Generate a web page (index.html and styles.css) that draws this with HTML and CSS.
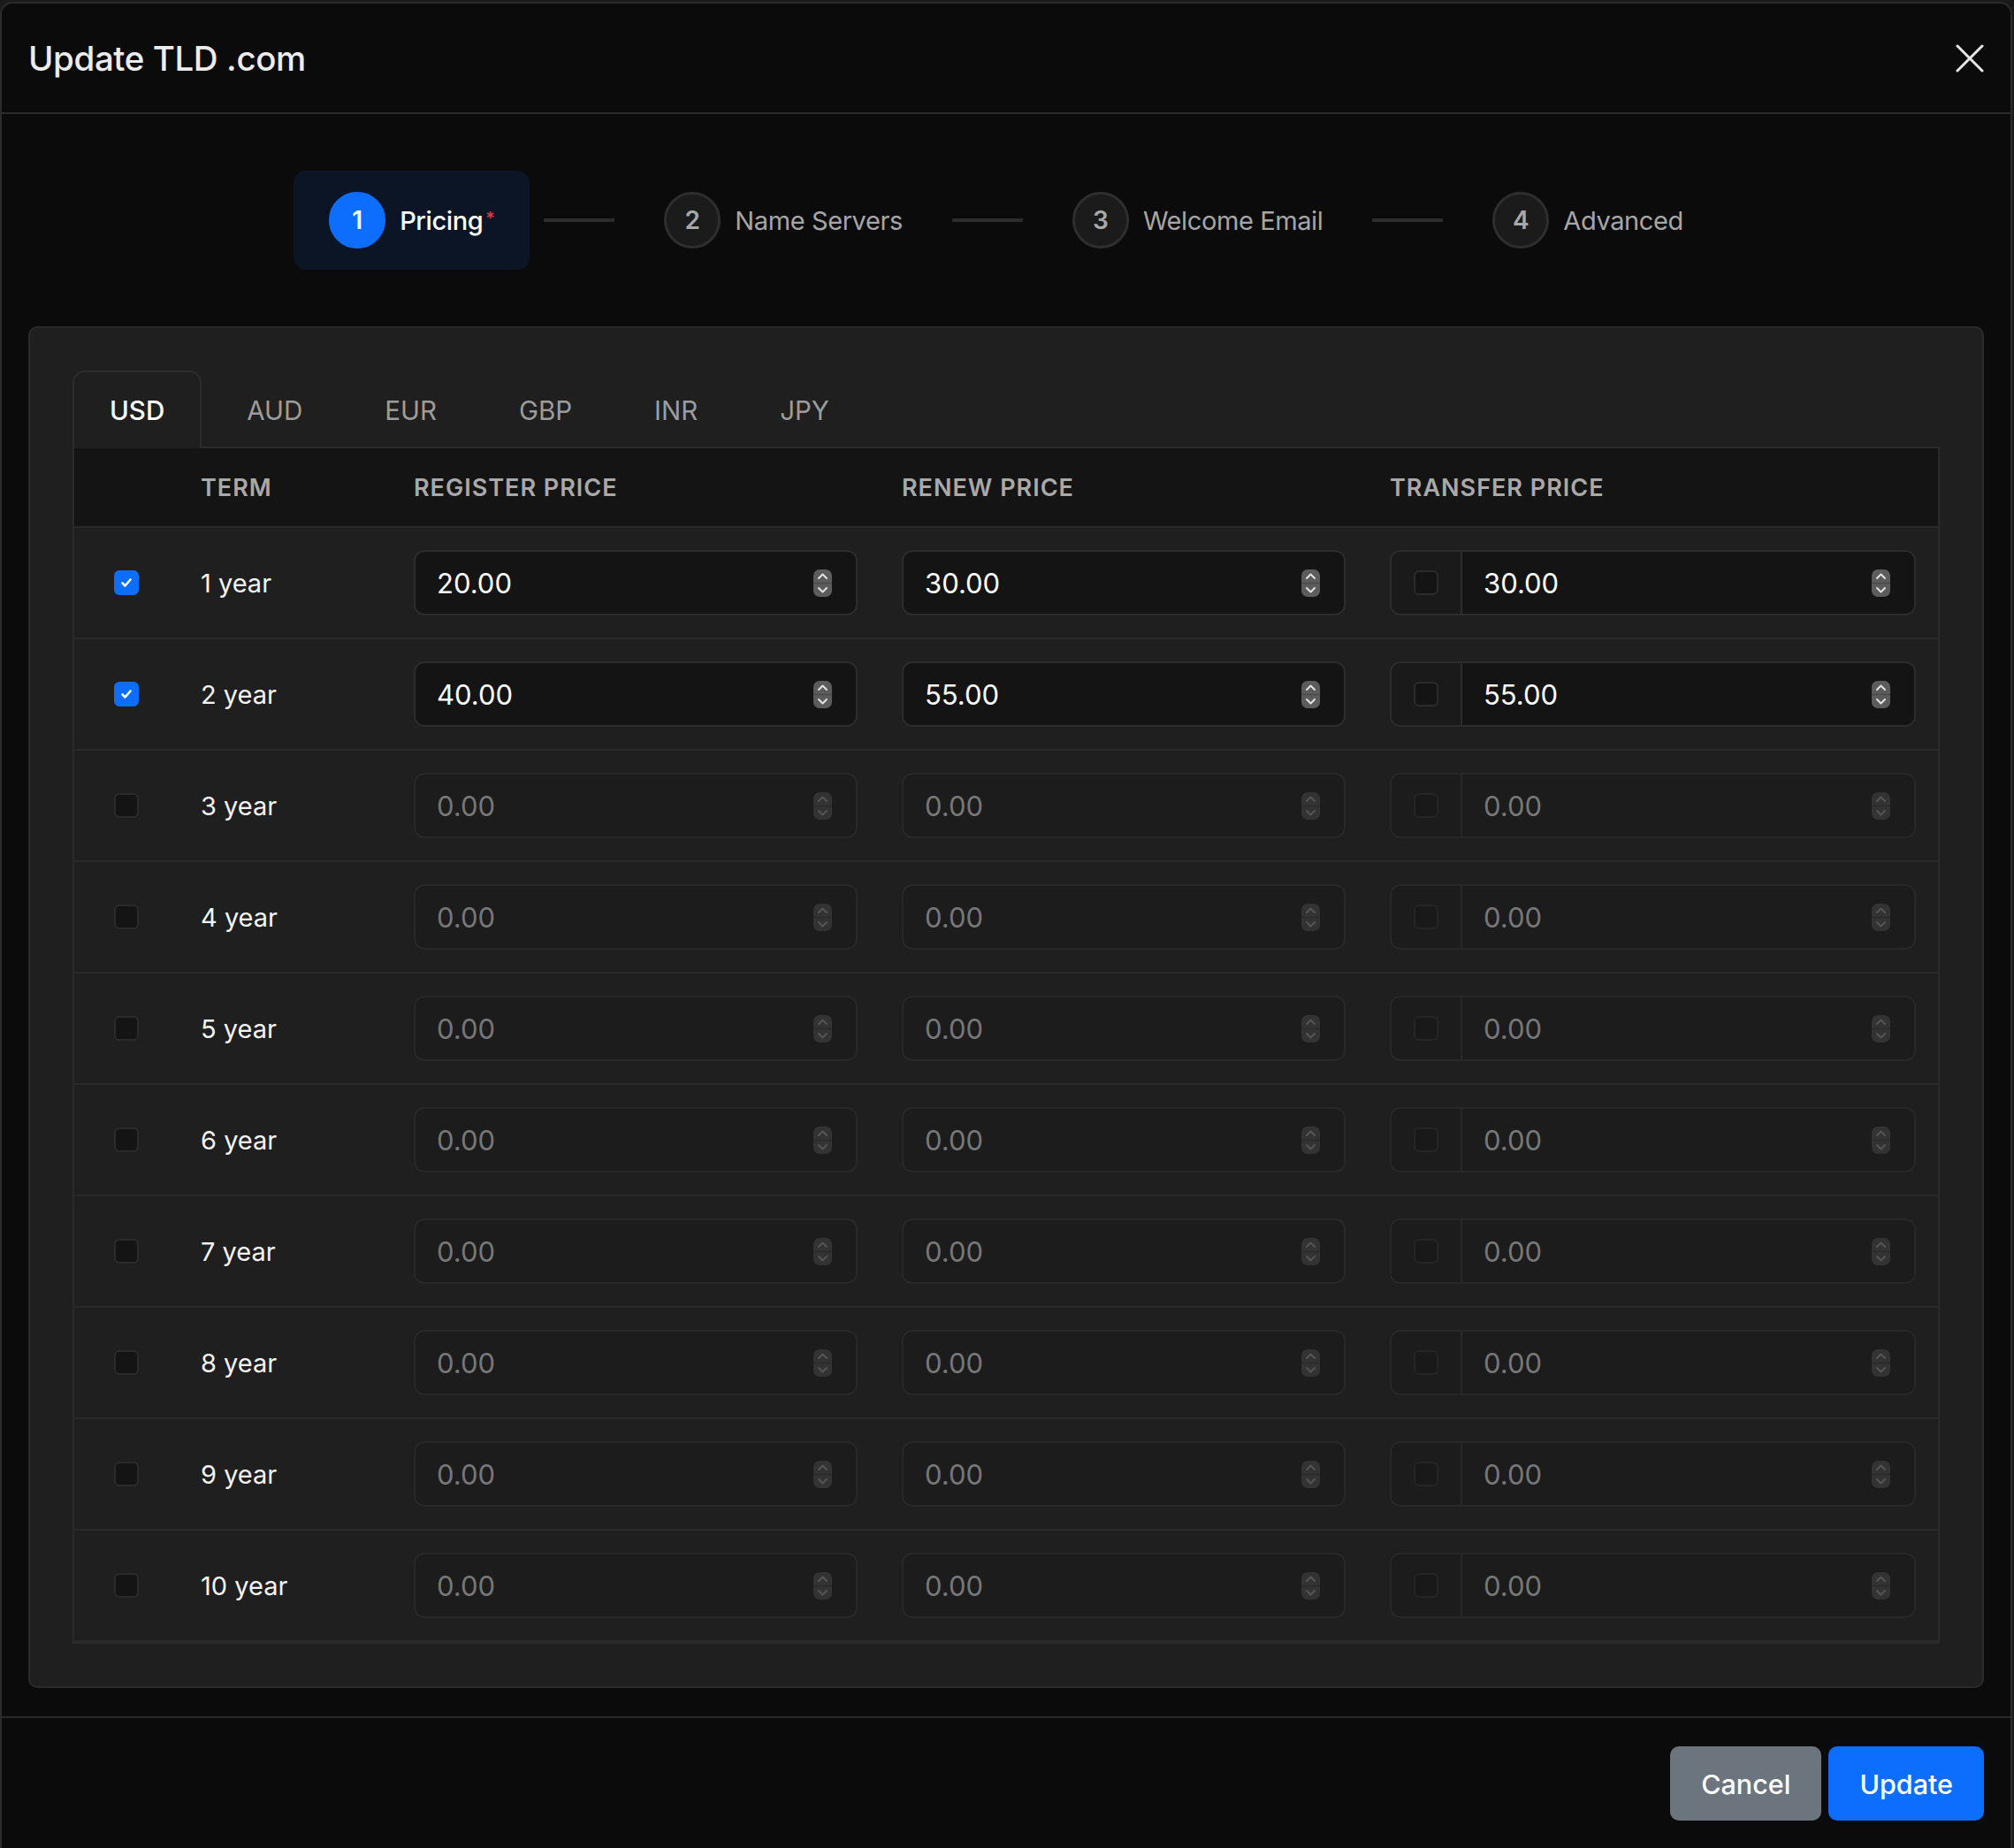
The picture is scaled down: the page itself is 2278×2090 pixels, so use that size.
FILE: index.html
```html
<!DOCTYPE html>
<html>
<head>
  <meta charset="UTF-8">
  <title>Update TLD .com</title>
  <link rel="stylesheet" href="styles.css">
</head>
<body>
  <div class="modal">
    <div class="modal-header">
      <h1 class="modal-title">Update TLD .com</h1>
      <button class="close-btn" aria-label="Close">
        <svg width="32" height="32" viewBox="0 0 32 32"><path d="M2 2 L30 30 M30 2 L2 30" stroke="#e6e6e6" stroke-width="3" stroke-linecap="round"/></svg>
      </button>
    </div>

    <div class="modal-body">
      <div class="stepper">
        <div class="step active"><span class="step-num">1</span><span class="step-label">Pricing<sup class="req">*</sup></span></div>
        <div class="step-line"></div>
        <div class="step"><span class="step-num">2</span><span class="step-label">Name Servers</span></div>
        <div class="step-line"></div>
        <div class="step"><span class="step-num">3</span><span class="step-label">Welcome Email</span></div>
        <div class="step-line"></div>
        <div class="step"><span class="step-num">4</span><span class="step-label">Advanced</span></div>
      </div>

      <div class="card">
        <div class="tabs">
          <div class="tab active">USD</div>
          <div class="tab">AUD</div>
          <div class="tab">EUR</div>
          <div class="tab">GBP</div>
          <div class="tab">INR</div>
          <div class="tab">JPY</div>
        </div>

        <div class="price-table" id="priceTable">
          <div class="row head">
            <div></div>
            <div>Term</div>
            <div>Register Price</div>
            <div>Renew Price</div>
            <div>Transfer Price</div>
          </div>
        </div>
      </div>
    </div>

    <div class="modal-footer">
      <button class="btn btn-cancel">Cancel</button>
      <button class="btn btn-update">Update</button>
    </div>
  </div>

  <script>
    const prices = {
      1: ['20.00', '30.00', '30.00'],
      2: ['40.00', '55.00', '55.00']
    };
    const table = document.getElementById('priceTable');

    const spin = `<span class="spin"><svg width="21" height="31" viewBox="0 0 21 31">
      <rect x="0" y="0" width="21" height="31" rx="7" class="spin-bg"/>
      <line x1="0" y1="15.5" x2="21" y2="15.5" class="spin-mid"/>
      <path d="M6 10 L10.5 5.5 L15 10 M6 21 L10.5 25.5 L15 21" class="spin-arrow"/>
    </svg></span>`;

    const tick = `<svg width="16" height="16" viewBox="0 0 16 16"><path d="M3.5 8.5 L6.5 11.5 L12.5 4.5" fill="none" stroke="#fff" stroke-width="2.6" stroke-linecap="round" stroke-linejoin="round"/></svg>`;

    function field(val) {
      return `<div class="field"><input type="text" value="${val}" readonly>${spin}</div>`;
    }

    for (let y = 1; y <= 10; y++) {
      const p = prices[y];
      const on = !!p;
      const row = document.createElement('div');
      row.className = 'row' + (on ? '' : ' off');
      row.innerHTML = `
        <div class="cell-check"><span class="check${on ? ' checked' : ''}">${on ? tick : ''}</span></div>
        <div class="term">${y} year</div>
        <div>${field(on ? p[0] : '0.00')}</div>
        <div>${field(on ? p[1] : '0.00')}</div>
        <div><div class="group"><span class="addon"><span class="check small"></span></span>${field(on ? p[2] : '0.00')}</div></div>`;
      table.appendChild(row);
    }
  </script>
</body>
</html>
```

FILE: styles.css
```css
* {
  margin: 0;
  padding: 0;
  box-sizing: border-box;
}

body {
  background: #1a1a1a;
  font-family: Inter, 'Noto Sans', sans-serif;
  color: #f2f2f2;
  padding-top: 2px;
}

.modal {
  background: #0b0b0b;
  border: 2px solid #2b2b2b;
  border-bottom: none;
  border-radius: 14px 14px 0 0;
  min-height: 2088px;
  margin-right: 2px;
}

.modal-header {
  height: 125px;
  padding: 0 30px;
  display: flex;
  align-items: center;
  justify-content: space-between;
  border-bottom: 2px solid #2a2a2a;
}

.modal-title {
  font-size: 38.5px;
  font-weight: 500;
  color: #ececec;
  letter-spacing: -0.4px;
}

.close-btn {
  background: none;
  border: none;
  width: 32px;
  height: 32px;
  cursor: pointer;
}

.modal-body {
  padding: 32px 30px;
}

.stepper {
  display: flex;
  align-items: center;
  justify-content: center;
  padding: 32px 0;
  margin-bottom: 32px;
}

.step {
  display: flex;
  align-items: center;
  gap: 16px;
  padding: 24px 40px;
  border-radius: 14px;
}

.step.active {
  background: #0b1526;
}

.step-num {
  width: 64px;
  height: 64px;
  border-radius: 50%;
  display: flex;
  align-items: center;
  justify-content: center;
  font-size: 28px;
  font-weight: 600;
  background: #1b1b1b;
  border: 3px solid #2e2e2e;
  color: #a8a8a8;
}

.step.active .step-num {
  background: #0d6efd;
  border-color: #0d6efd;
  color: #fff;
}

.step-label {
  font-size: 29px;
  color: #a6a6a6;
  letter-spacing: -0.4px;
}

.step.active .step-label {
  color: #fff;
  font-weight: 500;
}

.req {
  color: #e03a48;
  font-size: 20px;
  margin-left: 3px;
  vertical-align: 6px;
}

.step-line {
  width: 80px;
  height: 4px;
  background: #2c2c2c;
  margin: 0 16px;
}

.card {
  background: #1f1f1f;
  border: 2px solid #2a2a2a;
  border-radius: 10px;
  padding: 48px;
}

.tabs {
  display: flex;
  gap: 9px;
  border-bottom: 2px solid #2a2a2a;
}

.tab {
  height: 88px;
  padding: 0 40px;
  display: flex;
  align-items: center;
  font-size: 29.5px;
  color: #9c9c9c;
  border: 2px solid transparent;
  border-bottom: none;
  border-radius: 14px 14px 0 0;
  margin-bottom: -2px;
}

.tab.active {
  color: #fff;
  font-weight: 500;
  border-color: #2c2c2c;
  background: #1f1f1f;
}

.price-table {
  border: 2px solid #2a2a2a;
  border-top: none;
}

.row {
  display: grid;
  grid-template-columns: 118px 241px 552px 552px minmax(0, 1fr);
  align-items: center;
  height: 126px;
  border-bottom: 2px solid #2a2a2a;
}

.row > div {
  padding: 0 25px;
  min-width: 0;
}

.row.head {
  height: 90px;
  background: #141414;
  font-size: 27px;
  font-weight: 600;
  text-transform: uppercase;
  letter-spacing: 1px;
  color: #a9a9a9;
}

.row > .cell-check {
  display: flex;
  justify-content: center;
  padding: 0;
}

.term {
  font-size: 29px;
  color: #f4f4f4;
}

.check {
  width: 28px;
  height: 28px;
  border-radius: 6px;
  background: #141414;
  border: 2px solid #2b2b2b;
  display: flex;
  align-items: center;
  justify-content: center;
}

.check.checked {
  background: #0d6efd;
  border-color: #0d6efd;
}

.field {
  display: flex;
  align-items: center;
  height: 74px;
  padding: 0 27px 0 24px;
  background: #141414;
  border: 2px solid #2c2c2c;
  border-radius: 12px;
}

.field input {
  flex: 1;
  width: 100%;
  min-width: 0;
  background: none;
  border: none;
  outline: none;
  font-family: inherit;
  font-size: 31px;
  color: #fff;
}

.spin {
  display: flex;
}

.spin-bg { fill: #5c5c5c; }
.spin-mid { stroke: #4a4a4a; stroke-width: 1.5; }
.spin-arrow { fill: none; stroke: #e2e2e2; stroke-width: 2; stroke-linecap: round; stroke-linejoin: round; }

.group {
  display: flex;
  height: 74px;
  border: 2px solid #2c2c2c;
  border-radius: 12px;
  overflow: hidden;
}

.addon {
  width: 80px;
  flex: none;
  display: flex;
  align-items: center;
  justify-content: center;
  background: #1a1a1a;
  border-right: 2px solid #2c2c2c;
}

.group .field {
  flex: 1;
  min-width: 0;
  height: 70px;
  border: none;
  border-radius: 0;
}

.row.off .field {
  background: #1c1c1c;
  border-color: #282828;
}

.row.off .group {
  border-color: #282828;
}

.row.off .addon {
  background: #1c1c1c;
  border-color: #282828;
}

.row.off .field input {
  color: #777;
}

.row.off .addon .check {
  background: #191919;
  border-color: #252525;
}

.row.off .spin-bg { fill: #333; }
.row.off .spin-mid { stroke: #2a2a2a; }
.row.off .spin-arrow { stroke: #555; }

.modal-footer {
  display: flex;
  justify-content: flex-end;
  gap: 8px;
  padding: 32px 30px;
  border-top: 2px solid #2a2a2a;
}

.btn {
  height: 84px;
  padding: 0 35px;
  border: none;
  border-radius: 10px;
  font-family: inherit;
  font-size: 30.5px;
  font-weight: 500;
  color: #fff;
  cursor: pointer;
}

.btn-cancel {
  background: #6c757d;
}

.btn-update {
  background: #0d6efd;
}
```
